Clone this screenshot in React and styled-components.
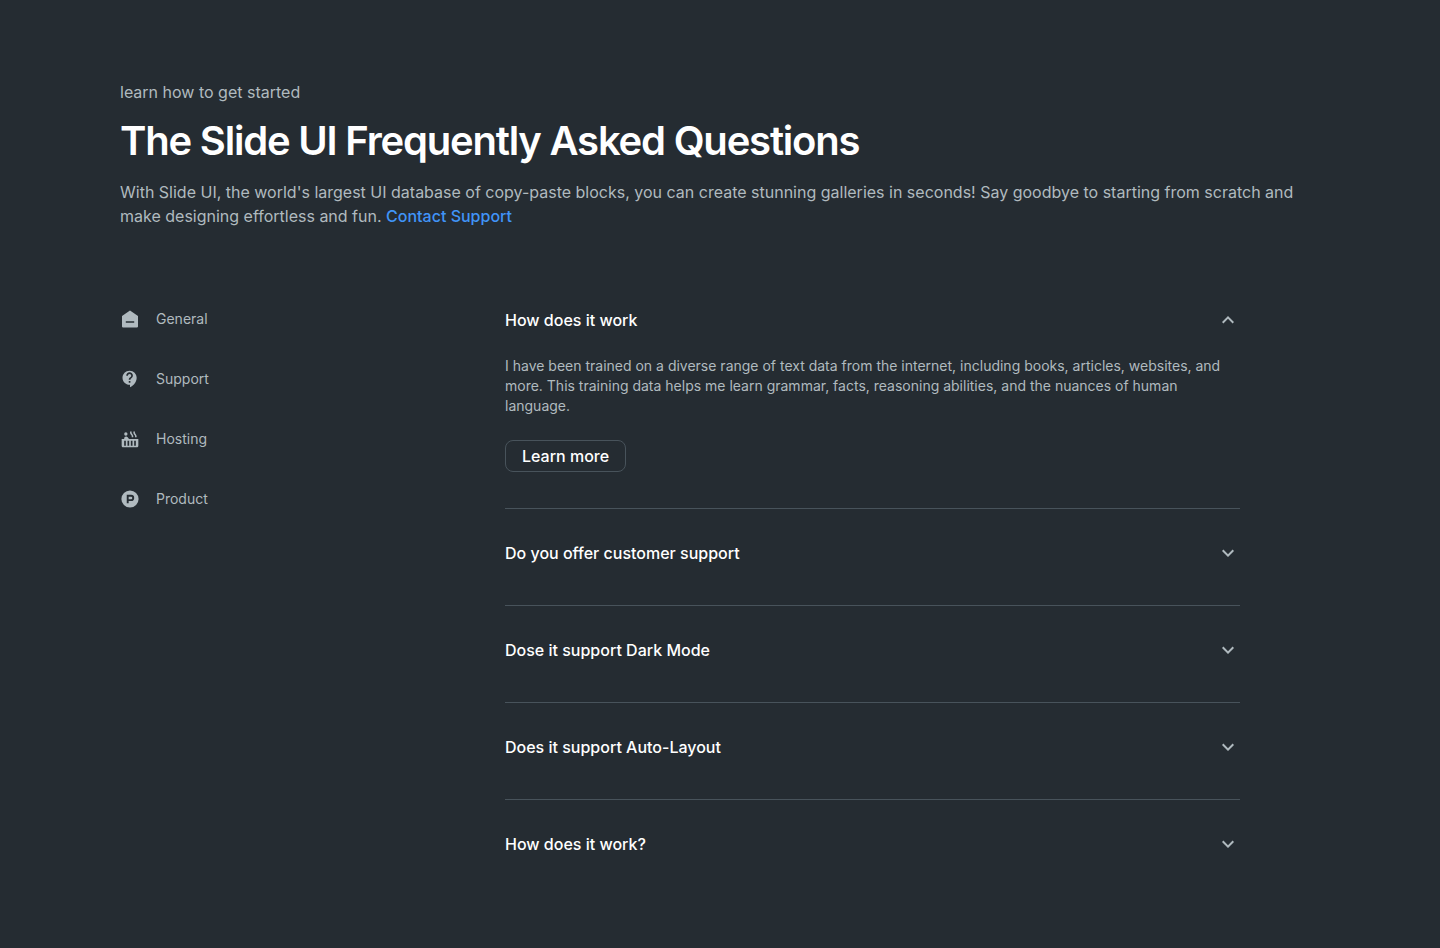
import React, { useState } from "react";
import styled, { createGlobalStyle } from "styled-components";
import { MdContactSupport, MdHotTub, MdKeyboardArrowDown, MdKeyboardArrowUp } from "react-icons/md";

const GlobalStyle = createGlobalStyle`
  *, *::before, *::after { box-sizing: border-box; }
  body {
    margin: 0;
    background: #252c32;
    color: #ffffff;
    font-family: Inter, "Liberation Sans", sans-serif;
    font-size: 16px;
    line-height: 24px;
    -webkit-font-smoothing: antialiased;
  }
  h1, h2, p, ul { margin: 0; padding: 0; }
`;

const Page = styled.main`
  min-height: 100vh;
  padding: 80px 120px;
`;

const Header = styled.header`
  display: flex;
  flex-direction: column;
`;

const Eyebrow = styled.p`
  color: #b0babf;
`;

const Title = styled.h1`
  margin: 12px 0 14px;
  font-size: 40px;
  line-height: 50px;
  font-weight: 600;
  letter-spacing: -0.03em;
`;

const Intro = styled.p`
  color: #b0babf;
`;

const SupportLink = styled.a`
  color: #4094f7;
  font-weight: 500;
  text-decoration: none;
`;

const Columns = styled.div`
  display: grid;
  grid-template-columns: 11fr 21fr;
  margin-top: 80px;
  padding-right: 80px;
`;

const Categories = styled.ul`
  display: flex;
  flex-direction: column;
  gap: 38px;
  list-style: none;
`;

const CategoryLink = styled.a`
  display: flex;
  align-items: center;
  gap: 16px;
  color: #b0babf;
  font-size: 14px;
  line-height: 22px;
  text-decoration: none;
`;

const Item = styled.section`
  padding: 32px 0 ${({ $open }) => ($open ? "36px" : "40px")};
  border-bottom: 1px solid #48535b;

  &:first-child { padding-top: 0; }
  &:last-child { border-bottom: 0; padding-bottom: 0; }
`;

const Question = styled.button`
  display: flex;
  align-items: center;
  justify-content: space-between;
  width: 100%;
  padding: 0;
  border: 0;
  background: none;
  color: #ffffff;
  font: inherit;
  font-weight: 500;
  text-align: left;
  cursor: pointer;

  svg { color: #b0babf; }
`;

const QuestionHeading = styled.h2`
  font: inherit;
`;

const Answer = styled.div`
  display: flex;
  flex-direction: column;
  align-items: flex-start;
  gap: 24px;
  margin-top: 24px;
`;

const AnswerText = styled.p`
  color: #b0babf;
  font-size: 14px;
  line-height: 20px;
`;

const OutlineButton = styled.button`
  height: 32px;
  padding: 0 16px;
  border: 1px solid #48535b;
  border-radius: 8px;
  background: transparent;
  color: #ffffff;
  font: inherit;
  font-weight: 500;
  line-height: 24px;
  cursor: pointer;
`;

const HomeIcon = () => (
  <svg width="20" height="20" viewBox="0 0 20 20" fill="currentColor" aria-hidden="true">
    <path
      fillRule="evenodd"
      d="M10 1.600 18 7v10.600a.8.8 0 0 1-.8.8H2.800a.8.8 0 0 1-.8-.8V7ZM5.800 12.200v1.600h8.400v-1.600Z"
    />
  </svg>
);

const ProductIcon = () => (
  <svg width="20" height="20" viewBox="0 0 20 20" fill="currentColor" aria-hidden="true">
    <circle cx="10" cy="10" r="8.600" />
    <path d="M7.700 14.200V6.800h3.400a2.100 2.100 0 0 1 0 4.300H7.700" fill="none" stroke="#252c32" strokeWidth="1.900" />
  </svg>
);

const categories = [
  { label: "General", Icon: HomeIcon },
  { label: "Support", Icon: () => <MdContactSupport size={20} aria-hidden="true" /> },
  { label: "Hosting", Icon: () => <MdHotTub size={20} aria-hidden="true" /> },
  { label: "Product", Icon: ProductIcon },
];

const questions = [
  "How does it work",
  "Do you offer customer support",
  "Dose it support Dark Mode",
  "Does it support Auto-Layout",
  "How does it work?",
];

const answer =
  "I have been trained on a diverse range of text data from the internet, including books, articles, websites, and more. This training data helps me learn grammar, facts, reasoning abilities, and the nuances of human language.";

export default function App() {
  const [openIndex, setOpenIndex] = useState(0);

  return (
    <>
      <GlobalStyle />
      <Page>
        <Header>
          <Eyebrow>learn how to get started</Eyebrow>
          <Title>The Slide UI Frequently Asked Questions</Title>
          <Intro>
            With Slide UI, the world's largest UI database of copy-paste blocks, you can create stunning galleries in
            seconds! Say goodbye to starting from scratch and make designing effortless and fun.{" "}
            <SupportLink href="#support">Contact Support</SupportLink>
          </Intro>
        </Header>
        <Columns>
          <nav aria-label="Categories">
            <Categories>
              {categories.map(({ label, Icon }) => (
                <li key={label}>
                  <CategoryLink href={`#${label.toLowerCase()}`}>
                    <Icon />
                    {label}
                  </CategoryLink>
                </li>
              ))}
            </Categories>
          </nav>
          <div>
            {questions.map((question, index) => {
              const open = index === openIndex;
              const Arrow = open ? MdKeyboardArrowUp : MdKeyboardArrowDown;
              return (
                <Item key={question} $open={open}>
                  <QuestionHeading>
                    <Question type="button" aria-expanded={open} onClick={() => setOpenIndex(open ? -1 : index)}>
                      {question}
                      <Arrow size={24} aria-hidden="true" />
                    </Question>
                  </QuestionHeading>
                  {open && (
                    <Answer>
                      <AnswerText>{answer}</AnswerText>
                      <OutlineButton type="button">Learn more</OutlineButton>
                    </Answer>
                  )}
                </Item>
              );
            })}
          </div>
        </Columns>
      </Page>
    </>
  );
}
